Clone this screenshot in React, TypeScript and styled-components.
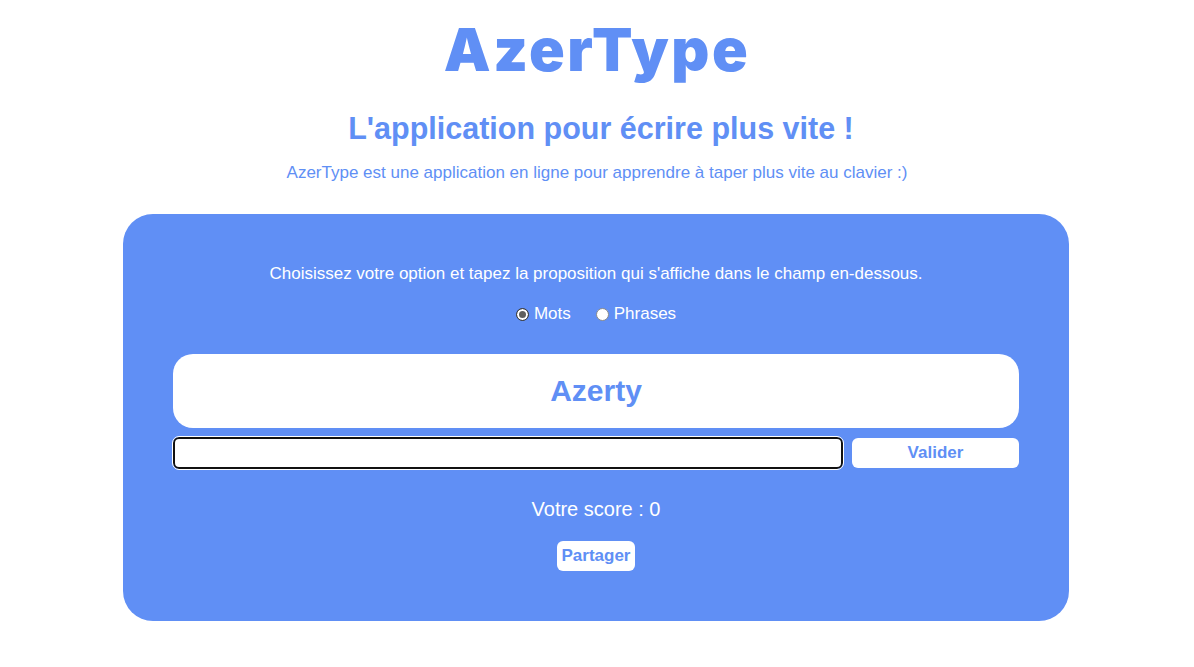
import React from "react";
import styled, { createGlobalStyle } from "styled-components";

const BLUE = "#608ff5";

const Global = createGlobalStyle`
  html, body { margin: 0; padding: 0; background: #fff; }
  body { font-family: "Liberation Sans", Arial, sans-serif; }
`;

const Page = styled.div`
  display: flex;
  flex-direction: column;
  align-items: center;
  padding-top: 17px;
`;

const Title = styled.h1`
  margin: 0;
  font-family: Inter, "Liberation Sans", sans-serif;
  font-size: 59px;
  line-height: 66px;
  font-weight: 900;
  letter-spacing: 2.5px;
  color: ${BLUE};
`;

const Subtitle = styled.h2`
  margin: 27px 0 0 8px;
  font-size: 30.5px;
  line-height: 36px;
  font-weight: bold;
  color: ${BLUE};
`;

const Intro = styled.p`
  margin: 17px 0 0;
  font-size: 17px;
  line-height: 20px;
  color: ${BLUE};
`;

const Card = styled.section`
  box-sizing: border-box;
  width: 946px;
  margin: 31px 2px 0 0;
  padding: 50px 50px 50px;
  background: ${BLUE};
  border-radius: 30px;
  display: flex;
  flex-direction: column;
  align-items: center;
  color: #fff;
`;

const Instruction = styled.p`
  margin: 0;
  font-size: 17px;
  line-height: 20px;
`;

const Options = styled.div`
  display: flex;
  gap: 25px;
  margin-top: 20px;
  font-size: 17px;
  line-height: 20px;
`;

const Option = styled.label`
  display: flex;
  align-items: center;
  gap: 5px;
`;

const Radio = styled.input`
  appearance: none;
  margin: 0;
  width: 13px;
  height: 13px;
  border-radius: 50%;
  box-sizing: border-box;
  background: #fff;
  border: 1px solid #8a8a8a;

  &:checked {
    border: 1px solid #3c3c3c;
    background: #5f5f5f;
    box-shadow: inset 0 0 0 2px #fff;
  }
`;

const Proposal = styled.div`
  align-self: stretch;
  margin-top: 30px;
  height: 74px;
  background: #fff;
  border-radius: 20px;
  display: flex;
  align-items: center;
  justify-content: center;
  color: ${BLUE};
  font-size: 30px;
  font-weight: bold;
`;

const InputRow = styled.div`
  align-self: stretch;
  display: flex;
  align-items: center;
  gap: 9px;
  margin-top: 9px;
`;

const TextInput = styled.input`
  box-sizing: border-box;
  flex: 1;
  height: 32px;
  border: 2px solid #111;
  outline: 1px solid #fff;
  border-radius: 6px;
  background: #fff;
  font-size: 16px;
`;

const Button = styled.button<{ $wide?: boolean }>`
  box-sizing: border-box;
  width: ${(p) => (p.$wide ? "167px" : "auto")};
  height: 30px;
  padding: 0 5px;
  border: none;
  border-radius: 6px;
  background: #fff;
  color: ${BLUE};
  font-family: "Liberation Sans", Arial, sans-serif;
  font-size: 17px;
  font-weight: bold;
`;

const Score = styled.p`
  margin: 28px 0 0;
  font-size: 20px;
  line-height: 24px;
`;

const ShareRow = styled.div`
  display: flex;
  margin-top: 20px;
`;

export default function App() {
  return (
    <>
      <Global />
      <Page>
        <Title>AzerType</Title>
        <Subtitle>L'application pour écrire plus vite !</Subtitle>
        <Intro>AzerType est une application en ligne pour apprendre à taper plus vite au clavier :)</Intro>
        <Card>
          <Instruction>
            Choisissez votre option et tapez la proposition qui s'affiche dans le champ en-dessous.
          </Instruction>
          <Options>
            <Option>
              <Radio type="radio" name="opt" defaultChecked />
              Mots
            </Option>
            <Option>
              <Radio type="radio" name="opt" />
              Phrases
            </Option>
          </Options>
          <Proposal>Azerty</Proposal>
          <InputRow>
            <TextInput type="text" />
            <Button $wide>Valider</Button>
          </InputRow>
          <Score>Votre score : 0</Score>
          <ShareRow>
            <Button>Partager</Button>
          </ShareRow>
        </Card>
      </Page>
    </>
  );
}
